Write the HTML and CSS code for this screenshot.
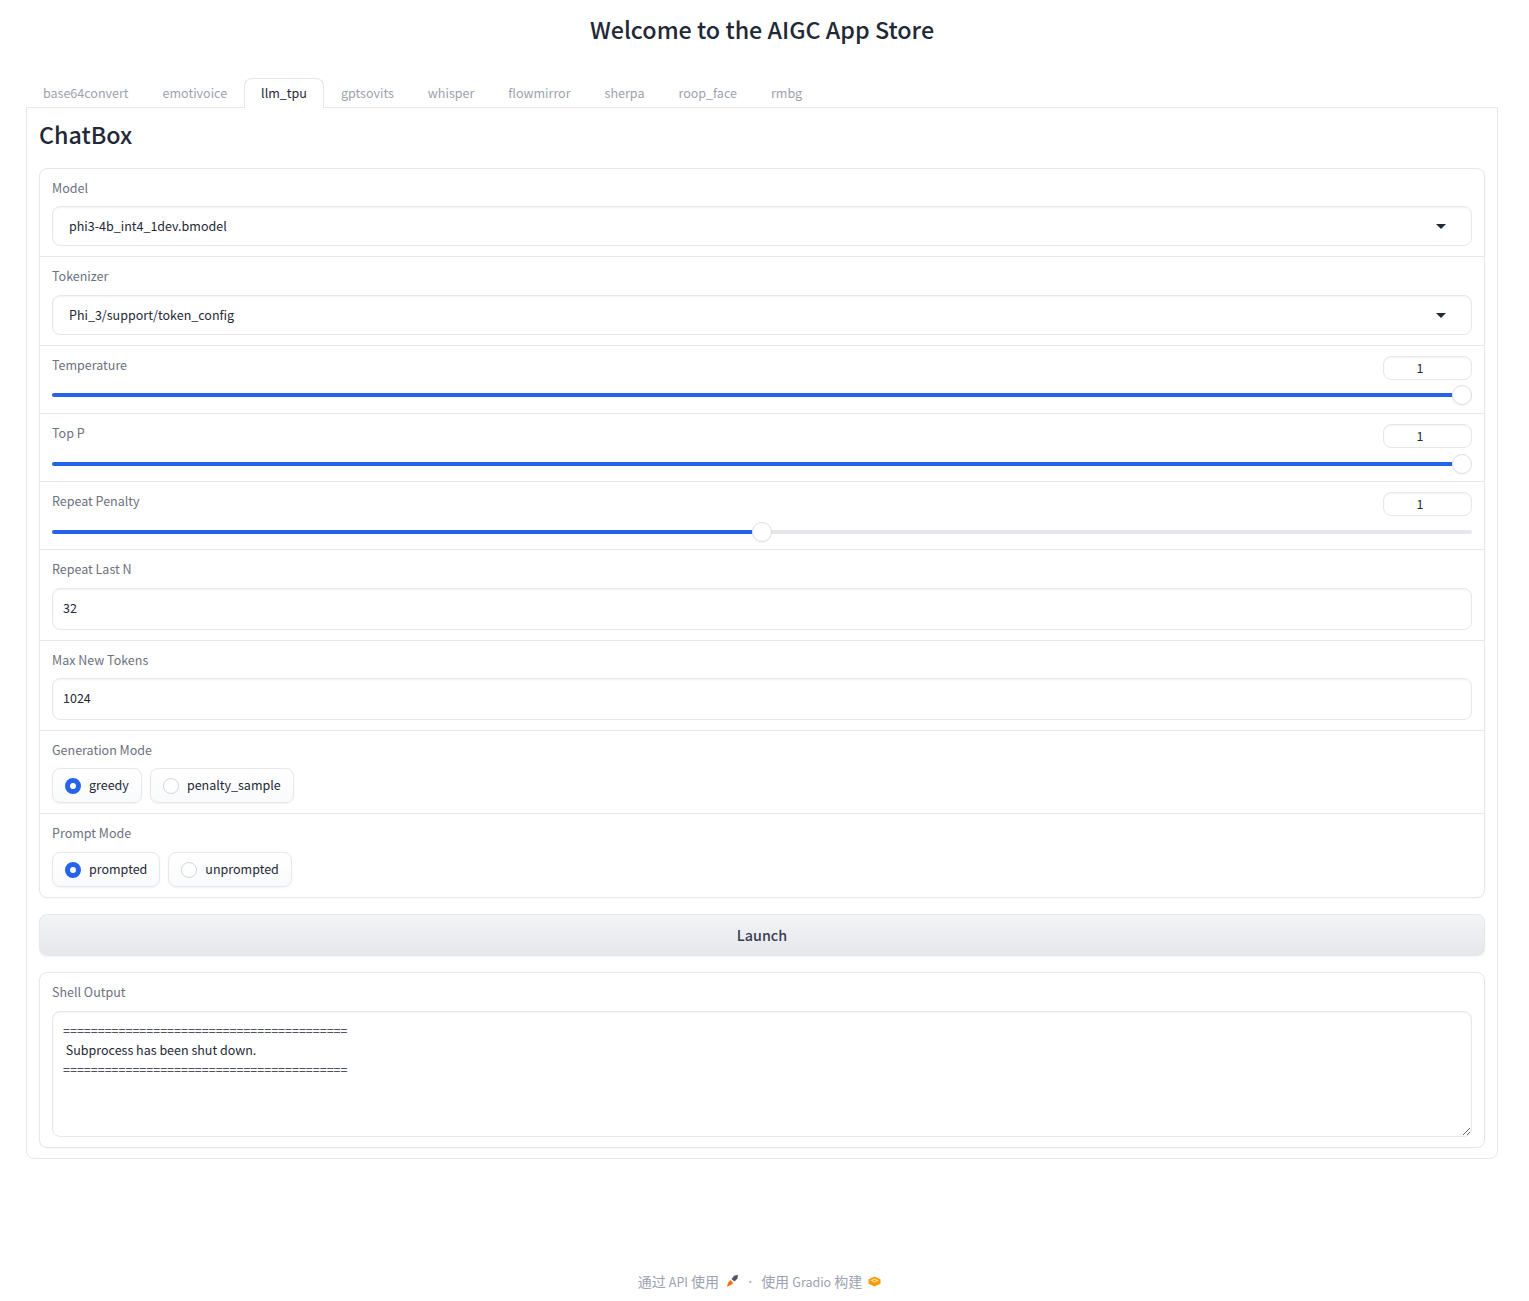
FILE: index.html
```html
<!DOCTYPE html>
<html lang="en">
<head>
  <meta charset="UTF-8" />
  <meta name="viewport" content="width=device-width, initial-scale=1" />
  <title>AIGC App Store</title>
  <link rel="stylesheet" href="styles.css">
</head>
<body>
  <div class="app">
    <h1 class="title">Welcome to the AIGC App Store</h1>

    <div class="tabs">
      <button class="tab">base64convert</button>
      <button class="tab">emotivoice</button>
      <button class="tab tab-active">llm_tpu</button>
      <button class="tab">gptsovits</button>
      <button class="tab">whisper</button>
      <button class="tab">flowmirror</button>
      <button class="tab">sherpa</button>
      <button class="tab">roop_face</button>
      <button class="tab">rmbg</button>
    </div>

    <div class="panel">
      <h2 class="heading">ChatBox</h2>

      <div class="group">
        <div class="row row-model">
          <div class="label">Model</div>
          <div class="select">
            <span>phi3-4b_int4_1dev.bmodel</span>
            <svg class="caret" width="10" height="5" viewBox="0 0 10 5"><path d="M0 0h10L5 5z" /></svg>
          </div>
        </div>
        <div class="row row-select">
          <div class="label">Tokenizer</div>
          <div class="select">
            <span>Phi_3/support/token_config</span>
            <svg class="caret" width="10" height="5" viewBox="0 0 10 5"><path d="M0 0h10L5 5z" /></svg>
          </div>
        </div>

        <div class="row row-slider">
          <div class="slider-head">
            <div class="label">Temperature</div>
            <div class="num-box">1</div>
          </div>
          <div class="track"><div class="fill fill-full"></div><div class="thumb"></div></div>
        </div>
        <div class="row row-slider">
          <div class="slider-head">
            <div class="label">Top P</div>
            <div class="num-box">1</div>
          </div>
          <div class="track"><div class="fill fill-full"></div><div class="thumb"></div></div>
        </div>
        <div class="row row-slider">
          <div class="slider-head">
            <div class="label">Repeat Penalty</div>
            <div class="num-box">1</div>
          </div>
          <div class="track"><div class="fill fill-half"></div><div class="thumb"></div></div>
        </div>

        <div class="row row-number">
          <div class="label">Repeat Last N</div>
          <input class="number" type="text" value="32" />
        </div>
        <div class="row row-number">
          <div class="label">Max New Tokens</div>
          <input class="number" type="text" value="1024" />
        </div>

        <div class="row row-radio">
          <div class="label">Generation Mode</div>
          <div class="radios">
            <div class="radio"><span class="dot dot-on"></span><span class="radio-text">greedy</span></div>
            <div class="radio"><span class="dot"></span><span class="radio-text">penalty_sample</span></div>
          </div>
        </div>
        <div class="row row-radio">
          <div class="label">Prompt Mode</div>
          <div class="radios">
            <div class="radio"><span class="dot dot-on"></span><span class="radio-text">prompted</span></div>
            <div class="radio"><span class="dot"></span><span class="radio-text">unprompted</span></div>
          </div>
        </div>
      </div>

      <button class="launch">Launch</button>

      <div class="group shell">
        <div class="label">Shell Output</div>
        <textarea class="output" readonly>=========================================
 Subprocess has been shut down.
=========================================</textarea>
      </div>
    </div>
  </div>

  <footer class="footer">
    <span>通过 <span class="latin">API</span> 使用</span>
    <svg class="foot-icon rocket" width="14" height="14" viewBox="0 0 14 14">
      <path d="M5.500 5l3-3.500 3.500-.5-.5 3.500-3 3z" fill="#4b5563" />
      <path d="M4.500 6l3 3-2.500 2-1 .5L1 13l.8-3.500.7-1.500z" fill="#f97316" />
    </svg>
    <span class="sep">·</span>
    <span>使用 <span class="latin">Gradio</span> 构建</span>
    <svg class="foot-icon gradio" width="13" height="11" viewBox="0 0 13 11">
      <path d="M6.500 .5l6 2.800v4.400l-6 2.800-6-2.800V3.300z" fill="#f59e0b" />
      <path d="M6.500 2.600l4 2-4 2-4-2z" fill="#fde68a" />
      <path d="M6.500 3.800l1.800 .9-1.800 .9-1.800-.9z" fill="#fb923c" />
    </svg>
  </footer>
</body>
</html>
```

FILE: styles.css
```css
* {
  box-sizing: border-box;
}
body {
  margin: 0;
  background: #fff;
  color: #1f2937;
  font-family: "Noto Sans CJK SC", "Noto Sans", sans-serif;
  font-size: 12.500px;
  line-height: 18px;
  min-height: 1301px;
  display: flex;
  flex-direction: column;
}
.app {
  padding: 0 31px 0 26px;
}
.title {
  margin: 0;
  height: 78px;
  padding-top: 12px;
  text-align: center;
  font-size: 23.300px;
  line-height: 34px;
  font-weight: 500;
  color: #1f2937;
}
.tabs {
  display: flex;
  height: 30px;
  position: relative;
  z-index: 1;
}
.tab {
  height: 30px;
  padding: 0 16px 2px;
  border: 1px solid transparent;
  border-bottom: none;
  border-radius: 8px 8px 0 0;
  background: none;
  color: #9ca3af;
  font: inherit;
  font-size: 12.530px;
}
.tab-active {
  border-color: #e5e7eb;
  background: #fff;
  color: #1f2937;
}
.panel {
  margin-top: -1px;
  height: 1052px;
  padding: 11px 12px 12px;
  border: 1px solid #e5e7eb;
  border-radius: 0 0 8px 8px;
}
.heading {
  margin: 0 0 18px;
  height: 31px;
  font-size: 23.300px;
  line-height: 31px;
  font-weight: 500;
  color: #1f2937;
}
.group {
  border: 1px solid #e5e7eb;
  border-radius: 8px;
  box-shadow: 0 1px 2px rgba(0, 0, 0, 0.03);
}
.row {
  padding: 10px 12px;
  border-top: 1px solid #e5e7eb;
}
.row:first-child {
  border-top: none;
}
.label {
  color: #6b7280;
  line-height: 17px;
}
.row-model {
  height: 87px;
  padding-bottom: 0;
}
.row-select {
  height: 89px;
}
.select {
  display: flex;
  align-items: center;
  justify-content: space-between;
  height: 40px;
  margin-top: 10px;
  padding: 0 25px 0 16px;
  border: 1px solid #e5e7eb;
  border-radius: 8px;
  box-shadow: inset 0 1px 2px rgba(0, 0, 0, 0.05);
  color: #1f2937;
}
.row-select .select {
  margin-top: 11px;
}
.caret {
  fill: #1f2937;
}
.row-slider {
  height: 68px;
}
.slider-head {
  display: flex;
  justify-content: space-between;
  height: 24px;
}
.num-box {
  width: 89px;
  height: 24px;
  padding-right: 15px;
  border: 1px solid #e5e7eb;
  border-radius: 8px;
  box-shadow: inset 0 1px 2px rgba(0, 0, 0, 0.05);
  text-align: center;
  line-height: 21px;
  color: #1f2937;
}
.track {
  display: flex;
  align-items: center;
  height: 4px;
  margin-top: 14px;
  border-radius: 2px;
  background: #e5e7eb;
}
.row-select + .row-slider .track {
  margin-top: 13px;
}
.fill {
  height: 4px;
  background: #2563eb;
  border-radius: 2px 0 0 2px;
}
.fill-full {
  width: calc(100% - 20px);
}
.fill-half {
  width: calc(50% - 10px);
}
.thumb {
  flex: none;
  width: 20px;
  height: 20px;
  border: 1px solid #dcdee2;
  border-radius: 50%;
  background: #fff;
  box-shadow: 0 1px 2px rgba(0, 0, 0, 0.05);
}
.row-number {
  height: 91px;
}
.row-number + .row-number {
  height: 90px;
}
.number {
  display: block;
  width: 100%;
  height: 42px;
  margin-top: 10px;
  padding: 0 10px 3px;
  border: 1px solid #e5e7eb;
  border-radius: 8px;
  box-shadow: inset 0 1px 2px rgba(0, 0, 0, 0.05);
  font: inherit;
  color: #1f2937;
  outline: none;
}
.row-slider + .row-number .number {
  margin-top: 11px;
}
.row-radio {
  height: 83px;
}
.row-radio:last-child {
  height: 84px;
}
.row-radio:last-child .radios {
  margin-top: 11px;
}
.radios {
  display: flex;
  gap: 8px;
  margin-top: 10px;
}
.radio {
  display: flex;
  align-items: center;
  height: 35px;
  padding: 0 12px;
  border: 1px solid #e5e7eb;
  border-radius: 8px;
  background: linear-gradient(#fff, #f9fafb);
  box-shadow: 0 1px 2px rgba(0, 0, 0, 0.05);
  color: #1f2937;
}
.radio-text {
  margin-bottom: 2px;
}
.dot {
  width: 16px;
  height: 16px;
  margin-right: 8px;
  border: 1px solid #d1d5db;
  border-radius: 50%;
  background: #fff;
}
.dot-on {
  border: 5px solid #2563eb;
}
.launch {
  display: block;
  width: 100%;
  height: 42px;
  margin: 16px 0;
  border: 1px solid #e5e7eb;
  border-radius: 8px;
  background: linear-gradient(#f3f4f6, #e5e7eb);
  box-shadow: 0 1px 2px rgba(0, 0, 0, 0.05);
  font: inherit;
  font-size: 14.300px;
  font-weight: 500;
  color: #374151;
}
.shell {
  height: 176px;
  padding: 10px 12px;
}
.output {
  display: block;
  width: 100%;
  height: 126px;
  margin-top: 11px;
  padding: 8.800px 10px;
  border: 1px solid #e5e7eb;
  border-radius: 8px;
  box-shadow: inset 0 1px 2px rgba(0, 0, 0, 0.05);
  font: inherit;
  line-height: 19.500px;
  color: #1f2937;
  outline: none;
}
.footer {
  margin-top: auto;
  display: flex;
  justify-content: center;
  align-items: center;
  height: 38px;
  padding: 0 10px 2px 0;
  color: #9ca3af;
  font-size: 14px;
}
.latin {
  font-size: 12.500px;
}
.foot-icon {
  margin-left: 6px;
}
.rocket {
  margin-left: 7px;
}
.sep {
  width: 14px;
  margin: 0 4px 0 3px;
  text-align: center;
  font-size: 11px;
  color: #b4b9c2;
}
```
